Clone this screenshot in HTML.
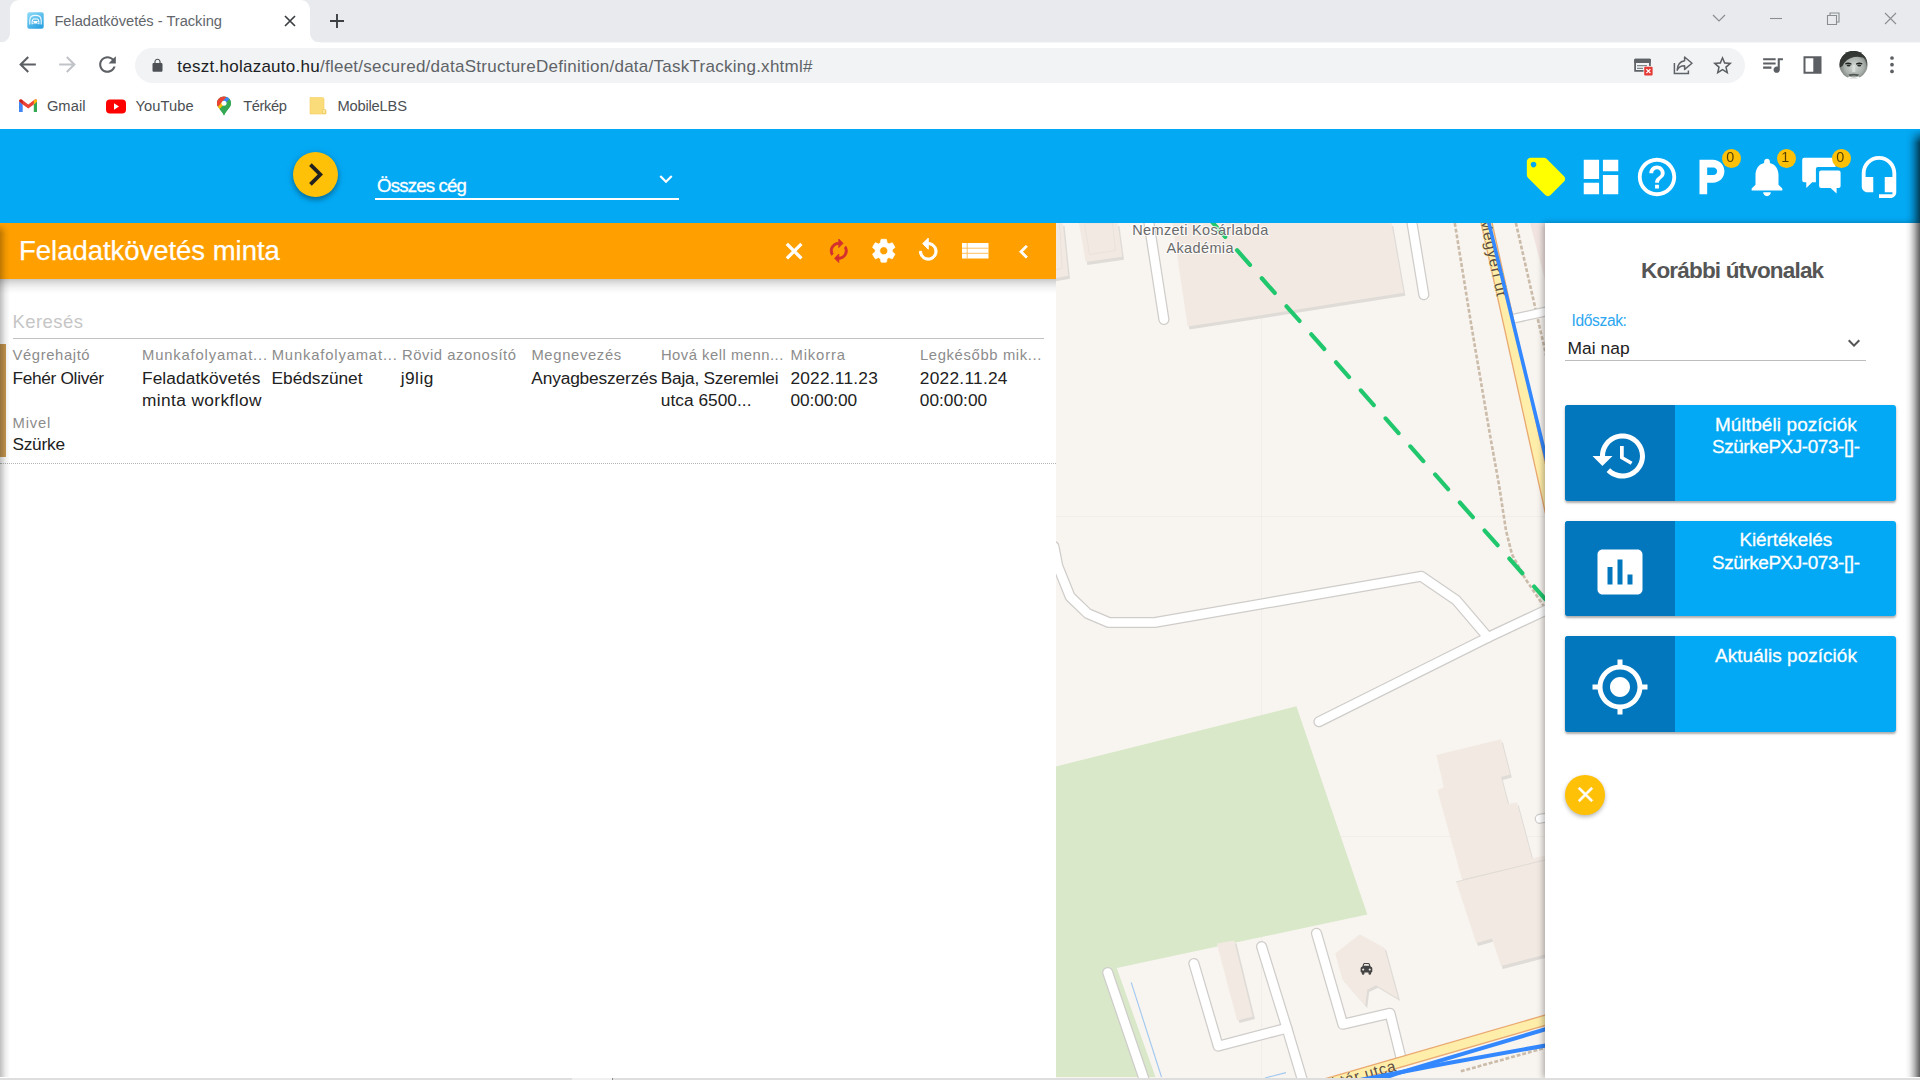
<!DOCTYPE html>
<html lang="hu"><head><meta charset="utf-8"><title>Feladatkövetés - Tracking</title>
<style>
html,body{margin:0;padding:0;}
body{width:1920px;height:1080px;overflow:hidden;position:relative;background:#fff;font-family:"Liberation Sans",sans-serif;}
.t{position:absolute;white-space:pre;line-height:1;}
.ic{position:absolute;display:block;}
.abs{position:absolute;}
</style></head><body>
<div class="abs" style="left:0;top:0;width:1920px;height:128px;background:#fff;overflow:hidden"><div class="abs" style="left:0;top:0;width:1920px;height:42px;background:#e8eaed"></div><div class="abs" style="left:0;top:42px;width:1920px;height:1px;background:#f4f5f6"></div><svg class="abs" style="left:0;top:0" width="330" height="43" viewBox="0 0 330 43"><path fill="#fff" d="M0 43 V42.5 C6 42.5 10 38.5 10 32.5 L10 10 C10 4 14 0 20 0 L300 0 C306 0 310 4 310 10 L310 32.5 C310 38.5 314 42.5 320 42.5 V43 Z"/></svg><svg class="abs" style="left:26.6px;top:12.4px" width="17" height="17" viewBox="0 0 17 17"><defs><linearGradient id="fv" x1="0" y1="0" x2="0.6" y2="1"><stop offset="0" stop-color="#8fdcf8"/><stop offset="1" stop-color="#2fa4e2"/></linearGradient></defs><rect x="0.3" y="0.3" width="16.4" height="16.4" rx="2" fill="url(#fv)"/><path d="M2.8 12.6 V8.2 Q2.8 3.4 8.5 3.4 Q14.2 3.4 14.2 8.2 V12.6" fill="none" stroke="#fff" stroke-width="1.1" opacity="0.9"/><path fill="#fff" d="M4.6 9.3 L5.5 7.2 Q5.8 6.5 6.6 6.5 H10.4 Q11.2 6.5 11.5 7.2 L12.4 9.3 V12.3 H11.2 V11.5 H5.8 V12.3 H4.6 Z M6.4 7.4 L5.9 8.9 H11.1 L10.6 7.4 Z M6.1 9.6 a0.7 0.7 0 1 0 0.01 0 Z M10.9 9.6 a0.7 0.7 0 1 0 0.01 0 Z" fill-rule="evenodd"/></svg><span class="t" style="left:54.4px;top:14px;font-size:14.7px;color:#62666b;letter-spacing:-0.024px;">Feladatkövetés - Tracking</span><svg class="abs" style="left:283px;top:14px" width="14" height="14" viewBox="0 0 14 14"><path d="M2 2 L12 12 M12 2 L2 12" stroke="#3c4043" stroke-width="1.7" fill="none"/></svg><svg class="abs" style="left:329px;top:13px" width="16" height="16" viewBox="0 0 16 16"><path d="M8 1 V15 M1 8 H15" stroke="#3c4043" stroke-width="1.9" fill="none"/></svg><svg class="abs" style="left:1700px;top:0" width="220" height="42" viewBox="0 0 220 42"><path d="M13 15 L19 21 L25 15" stroke="#8a8d91" stroke-width="1.2" fill="none"/><path d="M70 18.5 H82" stroke="#8a8d91" stroke-width="1.1"/><path d="M127.5 15.5 H136.5 V24.5 H127.5 Z M130 15.5 V13 H139 V22 H136.5" stroke="#8a8d91" stroke-width="1.1" fill="none"/><path d="M185 13 L196 24 M196 13 L185 24" stroke="#8a8d91" stroke-width="1.1"/></svg><svg class="ic" style="left:15.0px;top:51.8px" width="25" height="25" viewBox="0 0 24 24"><path fill="#5c5f63"  d="M20 11H7.83l5.59-5.59L12 4l-8 8 8 8 1.41-1.41L7.83 13H20v-2z"/></svg><svg class="ic" style="left:55.0px;top:51.8px" width="25" height="25" viewBox="0 0 24 24"><path fill="#c0c3c7"  d="M12 4l-1.41 1.41L16.17 11H4v2h12.17l-5.58 5.59L12 20l8-8z"/></svg><svg class="ic" style="left:95.0px;top:51.9px" width="25" height="25" viewBox="0 0 24 24"><path fill="#5c5f63"  d="M17.65 6.35C16.2 4.9 14.21 4 12 4c-4.42 0-7.99 3.58-7.99 8s3.57 8 7.99 8c3.73 0 6.84-2.55 7.73-6h-2.08c-.82 2.33-3.04 4-5.65 4-3.31 0-6-2.69-6-6s2.69-6 6-6c1.66 0 3.14.69 4.22 1.78L13 11h7V4l-2.35 2.35z"/></svg><div class="abs" style="left:135px;top:48px;width:1610px;height:35px;border-radius:18px;background:#f1f3f4"></div><svg class="ic" style="left:150.0px;top:58.4px" width="15" height="15" viewBox="0 0 24 24"><path fill="#4d5156"  d="M18 8h-1V6c0-2.76-2.24-5-5-5S7 3.24 7 6v2H6c-1.1 0-2 .9-2 2v10c0 1.1.9 2 2 2h12c1.1 0 2-.9 2-2V10c0-1.1-.9-2-2-2zM15.1 8H8.9V6c0-1.71 1.39-3.1 3.1-3.1 1.71 0 3.1 1.39 3.1 3.1v2z"/></svg><span class="t" style="left:177.3px;top:58px;font-size:17px;color:#5f6368;letter-spacing:0.258px;"><span style="color:#202124">teszt.holazauto.hu</span>/fleet/secured/dataStructureDefinition/data/TaskTracking.xhtml#</span><svg class="abs" style="left:1633px;top:57px" width="22" height="20" viewBox="0 0 22 20"><path d="M2.1 2.6 H16.9 V9 M2.1 2.6 V13.9 H10.5" stroke="#5f6368" stroke-width="1.8" fill="none" stroke-linejoin="round"/><rect x="1.2" y="1.7" width="16.6" height="4.2" rx="1" fill="#5f6368"/><path d="M4 8.7 H14 M4 11.4 H10" stroke="#5f6368" stroke-width="1.3" opacity="0.75"/><rect x="11.2" y="9.8" width="8.4" height="8.6" rx="1" fill="#e53935"/><path d="M13.4 12.1 L17.4 16.1 M17.4 12.1 L13.4 16.1" stroke="#fff" stroke-width="1.3"/></svg><svg class="abs" style="left:1672px;top:55px" width="24" height="22" viewBox="0 0 24 22"><path d="M12.6 2 L20 8.2 L12.6 14.4 V10.8 C8.8 10.8 6.4 12.2 5.2 15.2 C5.4 10.2 7.8 6.6 12.6 5.8 Z" stroke="#5f6368" stroke-width="1.5" fill="none" stroke-linejoin="round"/><path d="M2.4 8 V18.6 H16.4 V15.6" stroke="#5f6368" stroke-width="1.5" fill="none"/></svg><svg class="ic" style="left:1711.0px;top:53.7px" width="23" height="23" viewBox="0 0 24 24"><path fill="#5c5f63"  d="M22 9.24l-7.19-.62L12 2 9.19 8.63 2 9.24l5.46 4.73L5.82 21 12 17.27 18.18 21l-1.63-7.03L22 9.24zM12 15.4l-3.76 2.27 1-4.28-3.32-2.88 4.38-.38L12 6.1l1.71 4.04 4.38.38-3.32 2.88 1 4.28L12 15.4z"/></svg><svg class="ic" style="left:1759.9px;top:51.7px" width="25" height="25" viewBox="0 0 24 24"><path fill="#5c5f63"  d="M15 6H3v2h12V6zm0 4H3v2h12v-2zM3 16h8v-2H3v2zM17 6v8.18c-.31-.11-.65-.18-1-.18-1.66 0-3 1.34-3 3s1.34 3 3 3 3-1.34 3-3V8h3V6h-5z"/></svg><svg class="abs" style="left:1803.3px;top:56px" width="19" height="18" viewBox="0 0 19 18"><path d="M1.5 1.2 H17.5 V16.8 H1.5 Z" stroke="#5c5f63" stroke-width="2" fill="none"/><rect x="10.3" y="1.2" width="7.2" height="15.6" fill="#5c5f63"/></svg><svg class="abs" style="left:1838.5px;top:50.5px" width="29" height="28" viewBox="0 0 29 28"><defs><clipPath id="avc"><circle cx="14.5" cy="13.8" r="14"/></clipPath><radialGradient id="av" cx="0.52" cy="0.55" r="0.6"><stop offset="0" stop-color="#d4dad5"/><stop offset="0.55" stop-color="#a9b0ab"/><stop offset="1" stop-color="#5c625e"/></radialGradient></defs><g clip-path="url(#avc)"><rect width="29" height="28" fill="url(#av)"/><path d="M0 0 H29 V9 Q22 4.5 15 6 Q7 7.5 3.5 15 L0 17 Z" fill="#2c302d" opacity="0.92"/><path d="M22 4 Q27 8 28 16 L29 6 Z" fill="#3a3f3b" opacity="0.7"/><path d="M6.2 12.2 Q9.5 10.4 12.6 12.6 L12.4 13.8 Q9.4 12.4 6.4 13.6 Z M17 12.6 Q20 10.4 23.4 12.2 L23.2 13.6 Q20.2 12.4 17.2 13.8 Z" fill="#1f2320"/><ellipse cx="9.6" cy="14.6" rx="2" ry="1" fill="#2a2e2b"/><ellipse cx="20.2" cy="14.6" rx="2" ry="1" fill="#2a2e2b"/><path d="M14 14 L13 20.5 Q14.8 21.6 16.6 20.5 L15.6 14 Z" fill="#e3e8e4" opacity="0.7"/><path d="M9.5 23.6 Q14.8 22 20 23.6 L19 25 Q14.8 23.8 10.5 25 Z" fill="#3a3f3b" opacity="0.8"/><path d="M7 28 L10 25.6 Q14.8 27.4 19.6 25.6 L23 28 Z" fill="#fff"/></g></svg><svg class="abs" style="left:1887.3px;top:54.3px" width="10" height="22" viewBox="0 0 10 22"><circle cx="5" cy="4" r="1.85" fill="#5c5f63"/><circle cx="5" cy="10.7" r="1.85" fill="#5c5f63"/><circle cx="5" cy="17.4" r="1.85" fill="#5c5f63"/></svg><svg class="abs" style="left:18.8px;top:99px" width="18.5" height="14" viewBox="0 0 18 14" preserveAspectRatio="none"><path d="M0 2 V13 H3.6 V5.5 Z" fill="#4285f4"/><path d="M18 2 V13 H14.4 V5.5 Z" fill="#34a853"/><path d="M0 2 Q0 0.3 1.6 0.3 Q2.4 0.3 3 0.8 L9 5.6 L15 0.8 Q15.6 0.3 16.4 0.3 Q18 0.3 18 2 L14.4 5.5 L9 9.6 L3.6 5.5 Z" fill="#ea4335"/><path d="M0 2 L3.6 5.5 V2.2 L3 0.8 Q1 -0.3 0 2Z" fill="#c5221f"/><path d="M18 2 L14.4 5.5 V2.2 L15 0.8 Q17 -0.3 18 2Z" fill="#fbbc04"/></svg><span class="t" style="left:46.9px;top:99px;font-size:14.7px;color:#4b4f53;letter-spacing:0.057px;">Gmail</span><svg class="abs" style="left:106px;top:98.6px" width="20" height="15" viewBox="0 0 20 15"><rect x="0" y="0.5" width="20" height="14" rx="4" fill="#f00"/><path d="M8 4.3 L13 7.5 L8 10.7 Z" fill="#fff"/></svg><span class="t" style="left:135.6px;top:99px;font-size:14.7px;color:#4b4f53;letter-spacing:0.062px;">YouTube</span><svg class="abs" style="left:216px;top:96px" width="16" height="20" viewBox="0 0 16 20"><path d="M8 0.5 C3.8 0.5 1 3.6 1 7.3 C1 11.5 5.5 14 8 19.5 C10.5 14 15 11.5 15 7.3 C15 3.6 12.2 0.5 8 0.5Z" fill="#34a853"/><path d="M8 0.5 C3.8 0.5 1 3.6 1 7.3 C1 8.6 1.4 9.7 2 10.8 L10.6 1 C9.8 0.7 8.9 0.5 8 0.5Z" fill="#ea4335"/><path d="M2 10.8 L5.8 6.3 L3 3 C1.7 4.2 1 5.7 1 7.3 C1 8.6 1.4 9.7 2 10.8Z" fill="#ea4335"/><path d="M10.6 1 L5.8 6.3 L8 9 L13.6 3 C12.8 2 11.8 1.4 10.6 1Z" fill="#4285f4"/><path d="M13.6 3 L3.5 13 C5 14.8 6.8 16.8 8 19.5 C10.5 14 15 11.5 15 7.3 C15 5.6 14.5 4.1 13.6 3Z" fill="#34a853"/><path d="M2 10.8 C2.4 11.6 2.9 12.3 3.5 13 L8 8.6 L5.8 6.3 Z" fill="#fbbc04"/><circle cx="8" cy="7.2" r="2.5" fill="#fff"/></svg><span class="t" style="left:243.2px;top:99px;font-size:14.7px;color:#4b4f53;letter-spacing:-0.386px;">Térkép</span><svg class="abs" style="left:309px;top:96px" width="18" height="19" viewBox="0 0 18 19"><path d="M1 1.5 H13.5 Q15 1.5 15 3 V14 H17 V18 H1 Z" fill="#fbdc7a" stroke="#f3cf63" stroke-width="0.6"/><rect x="13.5" y="13.5" width="3" height="4" rx="0.8" fill="#fde9a0" stroke="#e6bf4d" stroke-width="0.6"/></svg><span class="t" style="left:337.4px;top:99px;font-size:14.7px;color:#4b4f53;letter-spacing:-0.180px;">MobileLBS</span></div><div class="abs" style="left:0;top:129px;width:1920px;height:94px;background:#04a9f4"></div><div class="abs" style="left:292.5px;top:152px;width:45px;height:45px;border-radius:50%;background:#ffc107;box-shadow:0 3px 5px rgba(0,0,0,.28),0 1px 8px rgba(0,0,0,.15)"></div><svg class="ic" style="left:292.8px;top:152.1px" width="45" height="45" viewBox="0 0 24 24"><path fill="#212121"  d="M10 6L8.59 7.41 13.17 12l-4.58 4.59L10 18l6-6z"/></svg><span class="t" style="left:377.1px;top:177px;font-size:18.6px;color:#fff;letter-spacing:-0.822px;-webkit-text-stroke:.3px #fff;">Összes cég</span><div class="abs" style="left:375px;top:198px;width:304px;height:2px;background:#fff"></div><svg class="ic" style="left:653.2px;top:165.8px" width="26" height="26" viewBox="0 0 24 24"><path fill="#fff"  d="M16.59 8.59L12 13.17 7.41 8.59 6 10l6 6 6-6z"/></svg><svg class="ic" style="left:1523.4px;top:153.5px" width="46" height="46" viewBox="0 0 24 24"><path fill="#ffff00"  d="M21.41 11.58l-9-9C12.05 2.22 11.55 2 11 2H4c-1.1 0-2 .9-2 2v7c0 .55.22 1.05.59 1.42l9 9c.36.36.86.58 1.41.58.55 0 1.05-.22 1.41-.59l7-7c.37-.36.59-.86.59-1.41 0-.55-.23-1.06-.59-1.42zM5.5 7C4.67 7 4 6.33 4 5.5S4.67 4 5.5 4 7 4.67 7 5.5 6.33 7 5.5 7z"/></svg><svg class="ic" style="left:1578.3px;top:153.5px" width="46" height="46" viewBox="0 0 24 24"><path fill="#fff"  d="M3 13h8V3H3v10zm0 8h8v-6H3v6zm10 0h8V11h-8v10zm0-18v6h8V3h-8z"/></svg><svg class="ic" style="left:1633.6px;top:153.5px" width="46" height="46" viewBox="0 0 24 24"><path fill="#fff"  d="M11 18h2v-2h-2v2zm1-16C6.48 2 2 6.48 2 12s4.48 10 10 10 10-4.48 10-10S17.52 2 12 2zm0 18c-4.41 0-8-3.59-8-8s3.59-8 8-8 8 3.59 8 8-3.59 8-8 8zm0-14c-2.21 0-4 1.79-4 4h2c0-1.1.9-2 2-2s2 .9 2 2c0 2-3 1.75-3 5h2c0-2.25 3-2.5 3-5 0-2.21-1.79-4-4-4z"/></svg><svg class="ic" style="left:1688.4px;top:153.5px" width="46" height="46" viewBox="0 0 24 24"><path fill="#fff"  d="M13 3H6v18h4v-6h3c3.31 0 6-2.69 6-6s-2.69-6-6-6zm.2 8H10V7h3.2c1.1 0 2 .9 2 2s-.9 2-2 2z"/></svg><svg class="ic" style="left:1743.5px;top:153.5px" width="46" height="46" viewBox="0 0 24 24"><path fill="#fff"  d="M12 22c1.1 0 2-.9 2-2h-4c0 1.1.89 2 2 2zm6-6v-5c0-3.07-1.64-5.64-4.5-6.32V4c0-.83-.67-1.5-1.5-1.5s-1.5.67-1.5 1.5v.68C7.63 5.36 6 7.92 6 11v5l-2 2v1h16v-1l-2-2z"/></svg><svg class="abs" style="left:1798px;top:153px" width="46" height="46" viewBox="0 0 46 46"><path fill="#fff" d="M6.2 4.8 H35.6 Q37.6 4.8 37.6 6.8 V13.9 H19.9 Q17.9 13.9 17.9 15.9 V29.2 H14.2 L8.3 35.1 V29.2 H6.2 Q4.2 29.2 4.2 27.2 V6.8 Q4.2 4.8 6.2 4.8 Z"/><path fill="#fff" d="M23.1 17.6 H40.6 Q42.6 17.6 42.6 19.6 V33.1 Q42.6 35.1 40.6 35.1 H38.6 V40.4 L32.6 35.1 H23.1 Q21.1 35.1 21.1 33.1 V19.6 Q21.1 17.6 23.1 17.6 Z"/></svg><svg class="ic" style="left:1855.5px;top:153.5px" width="46" height="46" viewBox="0 0 24 24"><path fill="#fff"  d="M12 1c-4.97 0-9 4.03-9 9v7c0 1.66 1.34 3 3 3h3v-8H5v-2c0-3.87 3.13-7 7-7s7 3.13 7 7v2h-4v8h4v1h-7v2h6c1.66 0 3-1.34 3-3V10c0-4.97-4.03-9-9-9z"/></svg><div class="abs" style="left:1721.5px;top:148.5px;width:19px;height:19px;border-radius:50%;background:#ffc107"></div><span class="t" style="left:1726.3px;top:149px;font-size:15.5px;color:rgba(40,30,0,.78);transform:scaleX(.93);transform-origin:50% 50%;">0</span><div class="abs" style="left:1776.5px;top:148.5px;width:19px;height:19px;border-radius:50%;background:#ffc107"></div><span class="t" style="left:1781.3px;top:149px;font-size:15.5px;color:rgba(40,30,0,.78);transform:scaleX(.93);transform-origin:50% 50%;">1</span><div class="abs" style="left:1831.5px;top:148.5px;width:19px;height:19px;border-radius:50%;background:#ffc107"></div><span class="t" style="left:1836.3px;top:149px;font-size:15.5px;color:rgba(40,30,0,.78);transform:scaleX(.93);transform-origin:50% 50%;">0</span><div class="abs" style="left:0;top:223px;width:1056px;height:855px;background:#fff"></div><div class="abs" style="left:0;top:223px;width:1056px;height:56px;background:#ffa000"></div><div class="abs" style="left:0;top:279px;width:1056px;height:15px;background:linear-gradient(180deg,rgba(0,0,0,.21),rgba(0,0,0,.15) 18%,rgba(0,0,0,.085) 40%,rgba(0,0,0,.035) 65%,rgba(0,0,0,0))"></div><span class="t" style="left:19.1px;top:237px;font-size:27.5px;color:#fff;letter-spacing:-0.036px;-webkit-text-stroke:.25px #fff;">Feladatkövetés minta</span><svg class="ic" style="left:781.4px;top:237.7px" width="26.3" height="26.3" viewBox="0 0 24 24"><path fill="#fff" stroke="#fff" stroke-width="1" d="M19 6.41L17.59 5 12 10.59 6.41 5 5 6.41 10.59 12 5 17.59 6.41 19 12 13.41 17.59 19 19 17.59 13.41 12z"/></svg><svg class="ic" style="left:825.8px;top:237.7px" width="25.6" height="25.6" viewBox="0 0 24 24"><path fill="#d32f2f" stroke="#d32f2f" stroke-width="0.8" d="M12 6v3l4-4-4-4v3c-4.42 0-8 3.58-8 8 0 1.57.46 3.03 1.24 4.26L6.7 14.8c-.45-.83-.7-1.79-.7-2.8 0-3.31 2.69-6 6-6zm6.76 1.74L17.3 9.2c.44.84.7 1.79.7 2.8 0 3.31-2.69 6-6 6v-3l-4 4 4 4v-3c4.42 0 8-3.58 8-8 0-1.57-.46-3.03-1.24-4.26z"/></svg><svg class="ic" style="left:869.9px;top:237.1px" width="27.5" height="27.5" viewBox="0 0 24 24"><path fill="#fff" stroke="#fff" stroke-width="0.6" d="M19.43 12.98c.04-.32.07-.64.07-.98s-.03-.66-.07-.98l2.11-1.65c.19-.15.24-.42.12-.64l-2-3.46c-.12-.22-.39-.3-.61-.22l-2.49 1c-.52-.4-1.08-.73-1.69-.98l-.38-2.65C14.46 2.18 14.25 2 14 2h-4c-.25 0-.46.18-.49.42l-.38 2.65c-.61.25-1.17.59-1.69.98l-2.49-1c-.23-.09-.49 0-.61.22l-2 3.46c-.13.22-.07.49.12.64l2.11 1.65c-.04.32-.07.65-.07.98s.03.66.07.98l-2.11 1.65c-.19.15-.24.42-.12.64l2 3.46c.12.22.39.3.61.22l2.49-1c.52.4 1.08.73 1.69.98l.38 2.65c.03.24.24.42.49.42h4c.25 0 .46-.18.49-.42l.38-2.65c.61-.25 1.17-.59 1.69-.98l2.49 1c.23.09.49 0 .61-.22l2-3.46c.12-.22.07-.49-.12-.64l-2.11-1.65zM12 15.5c-1.93 0-3.5-1.57-3.5-3.5s1.57-3.5 3.5-3.5 3.5 1.57 3.5 3.5-1.57 3.5-3.5 3.5z"/></svg><svg class="ic" style="left:915.0px;top:236.8px" width="26.5" height="26.5" viewBox="0 0 24 24"><path fill="#fff" stroke="#fff" stroke-width="0.9" d="M12 5V1L7 6l5 5V7c3.31 0 6 2.69 6 6s-2.69 6-6 6-6-2.69-6-6H4c0 4.42 3.58 8 8 8s8-3.58 8-8-3.58-8-8-8z"/></svg><svg class="abs" style="left:962px;top:243px" width="27" height="16" viewBox="0 0 27 16"><rect x="0" y="0" width="26.5" height="15.5" fill="#fff"/><path d="M5.2 0 V15.5 M0 5.2 H26.5 M0 10.3 H26.5" stroke="#ffb84d" stroke-width="0.9"/></svg><svg class="ic" style="left:1011.0px;top:239.1px" width="25.5" height="25.5" viewBox="0 0 24 24"><path fill="#fff" stroke="#fff" stroke-width="0.9" d="M15.41 7.41L14 6l-6 6 6 6 1.41-1.41L10.83 12z"/></svg><span class="t" style="left:12.4px;top:313px;font-size:18.5px;color:#c6c6c6;letter-spacing:0.444px;">Keresés</span><div class="abs" style="left:13px;top:338px;width:1031px;height:1px;background:#c2c2c2"></div><div class="abs" style="left:0;top:344px;width:6px;height:113px;background:#c9984f"></div><span class="t" style="left:12.5px;top:348px;font-size:14.8px;color:#8c8c8c;letter-spacing:0.613px;">Végrehajtó</span><span class="t" style="left:142.1px;top:348px;font-size:14.8px;color:#8c8c8c;letter-spacing:0.821px;">Munkafolyamat...</span><span class="t" style="left:271.7px;top:348px;font-size:14.8px;color:#8c8c8c;letter-spacing:0.835px;">Munkafolyamat...</span><span class="t" style="left:401.9px;top:348px;font-size:14.8px;color:#8c8c8c;letter-spacing:0.570px;">Rövid azonosító</span><span class="t" style="left:531.4px;top:348px;font-size:14.8px;color:#8c8c8c;letter-spacing:0.654px;">Megnevezés</span><span class="t" style="left:660.9px;top:348px;font-size:14.8px;color:#8c8c8c;letter-spacing:0.504px;">Hová kell menn...</span><span class="t" style="left:790.5px;top:348px;font-size:14.8px;color:#8c8c8c;letter-spacing:0.861px;">Mikorra</span><span class="t" style="left:919.9px;top:348px;font-size:14.8px;color:#8c8c8c;letter-spacing:0.649px;">Legkésőbb mik...</span><span class="t" style="left:12.5px;top:416px;font-size:14.8px;color:#8c8c8c;letter-spacing:0.840px;">Mivel</span><span class="t" style="left:12.4px;top:370px;font-size:17.3px;color:#212121;letter-spacing:-0.308px;">Fehér Olivér</span><span class="t" style="left:142.0px;top:370px;font-size:17.3px;color:#212121;letter-spacing:0.091px;">Feladatkövetés</span><span class="t" style="left:142.0px;top:392px;font-size:17.3px;color:#212121;letter-spacing:0.401px;">minta workflow</span><span class="t" style="left:271.6px;top:370px;font-size:17.3px;color:#212121;letter-spacing:-0.043px;">Ebédszünet</span><span class="t" style="left:400.8px;top:370px;font-size:17.3px;color:#212121;letter-spacing:0.435px;">j9lig</span><span class="t" style="left:531.3px;top:370px;font-size:17.3px;color:#212121;letter-spacing:-0.136px;">Anyagbeszerzés</span><span class="t" style="left:660.8px;top:370px;font-size:17.3px;color:#212121;letter-spacing:-0.239px;">Baja, Szeremlei</span><span class="t" style="left:660.8px;top:392px;font-size:17.3px;color:#212121;letter-spacing:0.033px;">utca 6500...</span><span class="t" style="left:790.4px;top:370px;font-size:17.3px;color:#212121;letter-spacing:0.241px;">2022.11.23</span><span class="t" style="left:790.4px;top:392px;font-size:17.3px;color:#212121;letter-spacing:-0.070px;">00:00:00</span><span class="t" style="left:919.8px;top:370px;font-size:17.3px;color:#212121;letter-spacing:0.275px;">2022.11.24</span><span class="t" style="left:919.8px;top:392px;font-size:17.3px;color:#212121;letter-spacing:0.016px;">00:00:00</span><span class="t" style="left:12.4px;top:436px;font-size:17.3px;color:#212121;letter-spacing:-0.221px;">Szürke</span><div class="abs" style="left:0;top:463px;width:1056px;height:0;border-top:1px dotted #b5b5b5"></div><div class="abs" style="left:0;top:223px;width:10px;height:854px;background:linear-gradient(90deg,rgba(0,0,0,.25),rgba(0,0,0,.17) 25%,rgba(0,0,0,.07) 55%,rgba(0,0,0,0));-webkit-mask-image:linear-gradient(180deg,transparent,#000 10px);mask-image:linear-gradient(180deg,transparent,#000 10px)"></div><svg class="abs" style="left:1056px;top:223px" width="489" height="855" viewBox="1056 223 489 855"><rect x="1056" y="223" width="489" height="855" fill="#f8f4f0"/><polygon points="1530.0,223.0 1545.0,223.0 1545.0,280.0" fill="#f1e4e0" /><path d="M1261.5 223 V1077 M1056 516.5 H1545 M1056 836.5 H1545" stroke="#f1ede8" stroke-width="1" fill="none"/><polygon points="1056.0,766.4 1296.4,706.3 1367.3,914.4 1116.7,967.9 1155.5,1077.0 1056.0,1077.0" fill="#d8e8c8" /><polygon points="1051.8,226.0 1064.6,226.0 1070.0,278.8 1051.8,282.0" fill="#dfdbd7" /><polygon points="1050.0,223.0 1062.8,223.0 1068.2,275.8 1050.0,279.0" fill="#f2eae2" /><path d="M1059.5 223 L1062.3 268.5 L1050 270.5" fill="none" stroke="#e6e0da" stroke-width="0.8"/><polygon points="1080.7,226.0 1119.5,226.0 1124.0,259.8 1087.4,265.0" fill="#dfdbd7" /><polygon points="1078.9,223.0 1117.7,223.0 1122.2,256.8 1085.6,262.0" fill="#f2eae2" /><polygon points="1084.5,223 1112.5,223 1115.5,250.5 1089.5,254.5" fill="none" stroke="#e6e0da" stroke-width="0.8"/><polygon points="1174.2,226.0 1393.2,226.0 1405.4,295.8 1189.4,329.6" fill="#dfdbd7" /><polygon points="1172.4,223.0 1391.4,223.0 1403.6,292.8 1187.6,326.6" fill="#f2eae2" /><polygon points="1219.2,946.2 1236.5,943.2 1255.0,1019.1 1239.5,1023.0" fill="#dfdbd7" /><polygon points="1216.8,943.6 1234.1,940.6 1252.6,1016.5 1237.1,1020.4" fill="#f2eae2" /><polygon points="1438.1,757.9 1502.8,742.2 1511.8,777.5 1502.8,780.0 1509.8,807.0 1518.8,805.5 1533.7,861.6 1546.8,858.5 1546.8,863.0 1463.8,882.5 1439.1,793.3 1445.5,790.3" fill="#dfdbd7" /><polygon points="1436.3,754.9 1501.0,739.2 1510.0,774.5 1501.0,777.0 1508.0,804.0 1517.0,802.5 1531.9,858.6 1545.0,855.5 1545.0,860.0 1462.0,879.5 1437.3,790.3 1443.7,787.3" fill="#f2eae2" /><polygon points="1458.0,884.9 1546.8,863.0 1546.8,957.6 1502.8,969.0 1493.8,941.4 1478.0,946.0" fill="#dfdbd7" /><polygon points="1456.2,881.9 1545.0,860.0 1545.0,954.6 1501.0,966.0 1492.0,938.4 1476.2,943.0" fill="#f2eae2" /><path d="M1456.2 881.9 L1545 860" stroke="#e2dcd6" stroke-width="1" fill="none"/><polygon points="1361.8,936.6 1386.3,950.2 1400.1,1000.9 1378.0,987.7 1369.2,992.1 1367.2,1008.0 1344.2,981.3 1337.2,955.9" fill="#dfdbd7" /><polygon points="1359.8,934.2 1384.3,947.8 1398.1,998.5 1376.0,985.3 1367.2,989.8 1365.2,1005.6 1342.2,978.9 1335.2,953.5" fill="#f2eae2" /><path d="M1131.2 982.4 L1161.5 1077" stroke="#a0c8f0" stroke-width="1.1" fill="none"/><path d="M1265 1078 L1285.9 1072.6" stroke="#a0c8f0" stroke-width="1.1" fill="none"/><path d="M1454.8 223.0 L1472.1 330.0 L1490.0 435.0 L1499.0 484.8 L1506.0 530.5 L1512.0 554.4 L1525.0 578.3 L1541.8 603.2 L1546.0 610.0" stroke="#cbbba9" stroke-width="2.6" stroke-dasharray="3.9 1.9" fill="none"/><path d="M1515.9 223.0 L1540.3 330.0 L1544.4 347.4 L1547.0 360.0" stroke="#cbbba9" stroke-width="2.6" stroke-dasharray="3.9 1.9" fill="none"/><path d="M1460.8 1071.3 L1545.0 1047.9" stroke="#cbbba9" stroke-width="2.6" stroke-dasharray="3.9 1.9" fill="none"/><path d="M1148.5 220.0 L1163.9 319.5" stroke="#cfcdca" stroke-width="11.2" fill="none" stroke-linecap="round" stroke-linejoin="round"/><path d="M1411.5 220.0 L1423.8 294.6" stroke="#cfcdca" stroke-width="11.2" fill="none" stroke-linecap="round" stroke-linejoin="round"/><path d="M1512.0 319.0 L1547.0 311.3" stroke="#cfcdca" stroke-width="10.2" fill="none" stroke-linecap="butt" stroke-linejoin="round"/><path d="M1054.0 546.5 L1057.8 566.0 L1070.1 596.6 L1087.6 613.5 L1108.9 622.5 L1154.7 622.5 L1421.4 576.3 L1456.2 600.2 L1488.0 637.4" stroke="#cfcdca" stroke-width="11.2" fill="none" stroke-linecap="round" stroke-linejoin="round"/><path d="M1319.0 721.7 L1488.0 637.4 L1547.0 609.7" stroke="#cfcdca" stroke-width="11.2" fill="none" stroke-linecap="round" stroke-linejoin="round"/><path d="M1539.8 818.8 L1550.0 817.0" stroke="#cfcdca" stroke-width="10.2" fill="none" stroke-linecap="round" stroke-linejoin="round"/><path d="M1107.7 972.5 L1145.0 1082.0" stroke="#cfcdca" stroke-width="11.2" fill="none" stroke-linecap="round" stroke-linejoin="round"/><path d="M1193.9 963.5 L1218.2 1046.1 L1286.9 1028.2" stroke="#cfcdca" stroke-width="11.2" fill="none" stroke-linecap="round" stroke-linejoin="round"/><path d="M1261.6 946.6 L1286.9 1028.2 L1303.0 1082.0" stroke="#cfcdca" stroke-width="11.2" fill="none" stroke-linecap="round" stroke-linejoin="round"/><path d="M1316.5 933.3 L1342.8 1024.2 L1390.0 1013.3 L1401.5 1060.0" stroke="#cfcdca" stroke-width="11.2" fill="none" stroke-linecap="round" stroke-linejoin="round"/><path d="M1148.5 220.0 L1163.9 319.5" stroke="#fff" stroke-width="8.7" fill="none" stroke-linecap="round" stroke-linejoin="round"/><path d="M1411.5 220.0 L1423.8 294.6" stroke="#fff" stroke-width="8.7" fill="none" stroke-linecap="round" stroke-linejoin="round"/><path d="M1512.0 319.0 L1547.0 311.3" stroke="#fff" stroke-width="7.7" fill="none" stroke-linecap="butt" stroke-linejoin="round"/><path d="M1054.0 546.5 L1057.8 566.0 L1070.1 596.6 L1087.6 613.5 L1108.9 622.5 L1154.7 622.5 L1421.4 576.3 L1456.2 600.2 L1488.0 637.4" stroke="#fff" stroke-width="8.7" fill="none" stroke-linecap="round" stroke-linejoin="round"/><path d="M1319.0 721.7 L1488.0 637.4 L1547.0 609.7" stroke="#fff" stroke-width="8.7" fill="none" stroke-linecap="round" stroke-linejoin="round"/><path d="M1539.8 818.8 L1550.0 817.0" stroke="#fff" stroke-width="7.7" fill="none" stroke-linecap="round" stroke-linejoin="round"/><path d="M1107.7 972.5 L1145.0 1082.0" stroke="#fff" stroke-width="8.7" fill="none" stroke-linecap="round" stroke-linejoin="round"/><path d="M1193.9 963.5 L1218.2 1046.1 L1286.9 1028.2" stroke="#fff" stroke-width="8.7" fill="none" stroke-linecap="round" stroke-linejoin="round"/><path d="M1261.6 946.6 L1286.9 1028.2 L1303.0 1082.0" stroke="#fff" stroke-width="8.7" fill="none" stroke-linecap="round" stroke-linejoin="round"/><path d="M1316.5 933.3 L1342.8 1024.2 L1390.0 1013.3 L1401.5 1060.0" stroke="#fff" stroke-width="8.7" fill="none" stroke-linecap="round" stroke-linejoin="round"/><path d="M1485.9 220.0 L1486.6 223.0 L1510.3 330.0 L1533.5 435.0 L1552.0 518.0" stroke="#e9aa72" stroke-width="12.100000000000001" fill="none"/><path d="M1485.9 220.0 L1486.6 223.0 L1510.3 330.0 L1533.5 435.0 L1552.0 518.0" stroke="#ffeeaa" stroke-width="9.4" fill="none"/><path d="M1310.0 1088.3 L1544.6 1020.4 L1552.0 1018.3" stroke="#e9aa72" stroke-width="11.3" fill="none"/><path d="M1310.0 1088.3 L1544.6 1020.4 L1552.0 1018.3" stroke="#ffeeaa" stroke-width="8.6" fill="none"/><text transform="translate(1479.9,219.6) rotate(77.5)" font-family="Liberation Sans, sans-serif" font-size="15.5" fill="#5f4f42" stroke="#ffeeaa" stroke-width="1" stroke-linejoin="round" paint-order="stroke" letter-spacing="0.75" x="0" y="0">Megyeri út</text><text transform="translate(1396.6,1070.6) rotate(-15.9)" font-family="Liberation Sans, sans-serif" font-size="15.5" fill="#5f4f42" stroke="#ffeeaa" stroke-width="1" stroke-linejoin="round" paint-order="stroke" letter-spacing="0.75" text-anchor="end" x="0.75" y="0">Közraktár utca</text><path d="M1488.9 223 L1514.9 330 L1540.4 435 L1547 462" stroke="#3388ff" stroke-width="3.6" fill="none" stroke-linecap="round"/><path d="M1547 1028.8 L1445.8 1058.9 L1396.7 1073.6 L1375 1081" stroke="#3388ff" stroke-width="4.1" fill="none" stroke-linejoin="round"/><path d="M1547 1045.2 L1445.8 1063.5 L1367.9 1078.5 L1355 1081" stroke="#3388ff" stroke-width="4.1" fill="none" stroke-linejoin="round"/><path d="M1207.7 217 L1545 598.9" stroke="#21c76d" stroke-width="4.2" stroke-dasharray="19.6 17.8" stroke-dashoffset="-6.9" stroke-linecap="round" fill="none"/><text font-family="Liberation Sans, sans-serif" font-size="14.5" fill="#6a6a6a" stroke="#fff" stroke-opacity="0.8" stroke-width="2" paint-order="stroke" text-anchor="middle"><tspan x="1200.3" y="235" textLength="136" lengthAdjust="spacing">Nemzeti Kosárlabda</tspan><tspan x="1200" y="252.8" textLength="67" lengthAdjust="spacing">Akadémia</tspan></text><g transform="translate(1360.6,963.1)" fill="#444"><path d="M2.6 0.9 Q2.9 0 3.8 0 H7.9 Q8.8 0 9.1 0.9 L10.3 4.2 H1.4 Z M3.7 1 L3.1 2.7 H8.6 L8 1 Z" fill-rule="evenodd"/><path d="M1.5 3.6 H10.2 Q11.7 3.6 11.7 5.1 V8.2 Q11.7 9.4 10.5 9.4 H1.2 Q0 9.4 0 8.2 V5.1 Q0 3.6 1.5 3.6 Z M2.6 5.3 a1.05 1.05 0 1 0 0.01 0 Z M9.1 5.3 a1.05 1.05 0 1 0 0.01 0 Z" fill-rule="evenodd"/><path d="M1.2 9 H3.8 V10.6 Q3.8 11.7 2.5 11.7 Q1.2 11.7 1.2 10.6 Z M7.9 9 H10.5 V10.6 Q10.5 11.7 9.2 11.7 Q7.9 11.7 7.9 10.6 Z"/></g></svg><div class="abs" style="left:1545px;top:223px;width:375px;height:855px;background:#fff;box-shadow:-2px 0 6px rgba(0,0,0,.30)"></div><span class="t" style="left:1641.0px;top:260px;font-size:22.5px;font-weight:700;color:#555;letter-spacing:-0.825px;">Korábbi útvonalak</span><span class="t" style="left:1571.5px;top:313px;font-size:15.6px;color:#2ba6f0;letter-spacing:-0.379px;">Időszak:</span><span class="t" style="left:1567.5px;top:340px;font-size:17.4px;color:#212121;letter-spacing:0.053px;">Mai nap</span><div class="abs" style="left:1565px;top:360px;width:301px;height:1px;background:#bdbdbd"></div><svg class="ic" style="left:1841.8px;top:331.4px" width="24" height="24" viewBox="0 0 24 24"><path fill="#555"  d="M16.59 8.59L12 13.17 7.41 8.59 6 10l6 6 6-6z"/></svg><div class="abs" style="left:1565px;top:405px;width:331px;height:95.5px;border-radius:3px;background:#03a9f4;overflow:hidden;box-shadow:0 2px 2px rgba(0,0,0,.26),0 1px 4px rgba(0,0,0,.12)"><div style="width:110px;height:100%;background:#0277bd"></div></div><svg class="ic" style="left:1590.3px;top:426.0px" width="60" height="60" viewBox="0 0 24 24"><path fill="#fff"  d="M13 3c-4.97 0-9 4.03-9 9H1l3.89 3.89.07.14L9 12H6c0-3.87 3.13-7 7-7s7 3.13 7 7-3.13 7-7 7c-1.93 0-3.68-.79-4.94-2.06l-1.42 1.42C8.27 19.99 10.51 21 13 21c4.97 0 9-4.03 9-9s-4.03-9-9-9zm-1 5v5l4.28 2.54.72-1.21-3.5-2.08V8H12z"/></svg><span class="t" style="left:1715.0px;top:416px;font-size:18.9px;color:#fff;letter-spacing:0.131px;-webkit-text-stroke:.3px #fff;">Múltbéli pozíciók</span><span class="t" style="left:1712.0px;top:438px;font-size:18.9px;color:#fff;letter-spacing:-0.398px;-webkit-text-stroke:.3px #fff;">SzürkePXJ-073-[]-</span><div class="abs" style="left:1565px;top:520.5px;width:331px;height:95.5px;border-radius:3px;background:#03a9f4;overflow:hidden;box-shadow:0 2px 2px rgba(0,0,0,.26),0 1px 4px rgba(0,0,0,.12)"><div style="width:110px;height:100%;background:#0277bd"></div></div><svg class="ic" style="left:1590.3px;top:541.5px" width="60" height="60" viewBox="0 0 24 24"><path fill="#fff"  d="M19 3H5c-1.1 0-2 .9-2 2v14c0 1.1.9 2 2 2h14c1.1 0 2-.9 2-2V5c0-1.1-.9-2-2-2zM9 17H7v-7h2v7zm4 0h-2V7h2v10zm4 0h-2v-4h2v4z"/></svg><span class="t" style="left:1739.4px;top:531px;font-size:18.9px;color:#fff;letter-spacing:-0.070px;-webkit-text-stroke:.3px #fff;">Kiértékelés</span><span class="t" style="left:1712.0px;top:554px;font-size:18.9px;color:#fff;letter-spacing:-0.398px;-webkit-text-stroke:.3px #fff;">SzürkePXJ-073-[]-</span><div class="abs" style="left:1565px;top:636px;width:331px;height:95.5px;border-radius:3px;background:#03a9f4;overflow:hidden;box-shadow:0 2px 2px rgba(0,0,0,.26),0 1px 4px rgba(0,0,0,.12)"><div style="width:110px;height:100%;background:#0277bd"></div></div><svg class="ic" style="left:1590.3px;top:657.0px" width="60" height="60" viewBox="0 0 24 24"><path fill="#fff"  d="M12 8c-2.21 0-4 1.79-4 4s1.79 4 4 4 4-1.79 4-4-1.79-4-4-4zm8.94 3c-.46-4.17-3.77-7.48-7.94-7.94V1h-2v2.06C6.83 3.52 3.52 6.83 3.06 11H1v2h2.06c.46 4.17 3.77 7.48 7.94 7.94V23h2v-2.06c4.17-.46 7.48-3.77 7.94-7.94H23v-2h-2.06zM12 19c-3.87 0-7-3.13-7-7s3.13-7 7-7 7 3.13 7 7-3.13 7-7 7z"/></svg><span class="t" style="left:1715.1px;top:647px;font-size:18.9px;color:#fff;letter-spacing:0.066px;-webkit-text-stroke:.3px #fff;">Aktuális pozíciók</span><div class="abs" style="left:1565.3px;top:775px;width:39.5px;height:39.5px;border-radius:50%;background:#ffc107;box-shadow:0 2px 4px rgba(0,0,0,.28)"></div><svg class="ic" style="left:1572.5px;top:782.3px" width="25" height="25" viewBox="0 0 24 24"><path fill="#fff" stroke="#fff" stroke-width="0.7" d="M19 6.41L17.59 5 12 10.59 6.41 5 5 6.41 10.59 12 5 17.59 6.41 19 12 13.41 17.59 19 19 17.59 13.41 12z"/></svg><div class="abs" style="left:1905px;top:129px;width:15px;height:948px;background:linear-gradient(90deg,rgba(0,0,0,0),rgba(0,0,0,.03) 20%,rgba(0,0,0,.09) 35%,rgba(0,0,0,.17) 47%,rgba(0,0,0,.28) 62%,rgba(0,0,0,.40) 75%,rgba(0,0,0,.52) 88%,rgba(0,0,0,.63));-webkit-mask-image:linear-gradient(180deg,transparent,#000 14px);mask-image:linear-gradient(180deg,transparent,#000 14px)"></div><div class="abs" style="left:0;top:1078px;width:1920px;height:2px;background:#dedede"></div><div class="abs" style="left:572px;top:1078px;width:40px;height:2px;background:#f0f0f0"></div><div class="abs" style="left:612px;top:1078px;width:1px;height:2px;background:#8a8a8a"></div></body></html>
